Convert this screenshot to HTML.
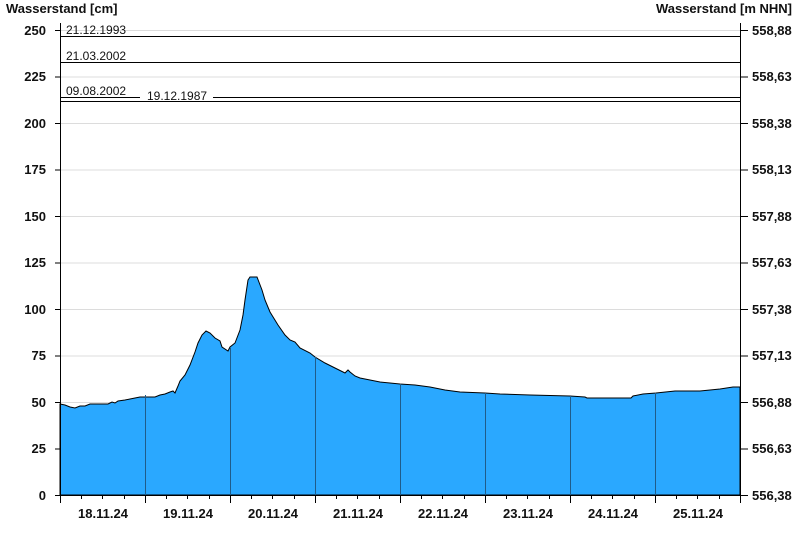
<!DOCTYPE html>
<html><head><style>
body{margin:0;background:#fff;}
svg{display:block;font-family:"Liberation Sans",Arial,sans-serif;}
.b{font-weight:bold;font-size:13px;fill:#111;}
.r{font-size:12px;fill:#111;}
</style></head><body>
<svg width="800" height="550" viewBox="0 0 800 550" xmlns="http://www.w3.org/2000/svg">
<text x="6" y="13" class="b">Wasserstand [cm]</text>
<text x="792" y="13" class="b" text-anchor="end">Wasserstand [m NHN]</text>
<g stroke="#dcdcdc" stroke-width="1">
<line x1="60" y1="30.5" x2="740" y2="30.5"/>
<line x1="60" y1="77" x2="740" y2="77"/>
<line x1="60" y1="123.5" x2="740" y2="123.5"/>
<line x1="60" y1="170" x2="740" y2="170"/>
<line x1="60" y1="216.5" x2="740" y2="216.5"/>
<line x1="60" y1="263" x2="740" y2="263"/>
<line x1="60" y1="309.5" x2="740" y2="309.5"/>
<line x1="60" y1="356" x2="740" y2="356"/>
<line x1="60" y1="402.5" x2="740" y2="402.5"/>
<line x1="60" y1="449" x2="740" y2="449"/>
</g>
<polygon fill="#2aa8ff" stroke="#000" stroke-width="1" points="60,495 60,404 65,405 70,407 75,408 80,406 85,406 90,404 100,404 108,404 112,402 115,403 118,401 125,400 130,399 135,398 140,397 145,397 155,397 160,395 165,394 170,392 173,391 175,393 178,386 180,381 185,375 190,365 195,352 198,343 202,335 206,331 210,333 215,338 220,341 222,347 228,351 230,347 235,343 240,330 243,315 245,300 248,280 250,277 257,277 262,290 265,300 270,312 278,325 285,335 290,340 295,342 300,348 310,353 315,357 325,363 335,368 345,373 348,370 350,372 355,376 360,378 370,380 380,382 390,383 400,384 415,385 430,387 445,390 460,392 485,393 500,394 530,395 570,396 585,397 587,398 631,398 633,396 643,394 656,393 675,391 700,391 720,389 733,387 740,387 740,495"/>
<g stroke="#1f5c8a" stroke-width="1">
<line x1="145.5" y1="395" x2="145.5" y2="495"/>
<line x1="230.5" y1="348" x2="230.5" y2="495"/>
<line x1="315.5" y1="357" x2="315.5" y2="495"/>
<line x1="400.5" y1="384" x2="400.5" y2="495"/>
<line x1="485.5" y1="393" x2="485.5" y2="495"/>
<line x1="570.5" y1="396" x2="570.5" y2="495"/>
<line x1="655.5" y1="393" x2="655.5" y2="495"/>
</g>
<g stroke="#000" stroke-width="1">
<line x1="60" y1="36.5" x2="740" y2="36.5"/>
<line x1="60" y1="62.5" x2="740" y2="62.5"/>
<line x1="60" y1="97.5" x2="140" y2="97.5"/>
<line x1="213" y1="97.5" x2="740" y2="97.5"/>
<line x1="60" y1="101.5" x2="740" y2="101.5"/>
<line x1="60.5" y1="23" x2="60.5" y2="495"/>
<line x1="740.5" y1="23" x2="740.5" y2="495"/>
<line x1="60" y1="495.5" x2="741" y2="495.5"/>
</g>
<text x="66" y="34" class="r">21.12.1993</text>
<text x="66" y="60" class="r">21.03.2002</text>
<text x="66" y="95" class="r">09.08.2002</text>
<text x="147" y="100" class="r">19.12.1987</text>
<g stroke="#000" stroke-width="1">
<path d="M55 30.5H60M55 77H60M55 123.5H60M55 170H60M55 216.5H60M55 263H60M55 309.5H60M55 356H60M55 402.5H60M55 449H60M55 495.5H60"/>
<path d="M741 30.5H748M741 77H748M741 123.5H748M741 170H748M741 216.5H748M741 263H748M741 309.5H748M741 356H748M741 402.5H748M741 449H748M741 495.5H748"/>
<path d="M60.5 495V503M145.5 495V503M230.5 495V503M315.5 495V503M400.5 495V503M485.5 495V503M570.5 495V503M655.5 495V503M740.5 495V503"/>
<path d="M81.5 495V499M102.5 495V499M124.5 495V499M166.5 495V499M187.5 495V499M209.5 495V499M251.5 495V499M272.5 495V499M294.5 495V499M336.5 495V499M357.5 495V499M379.5 495V499M421.5 495V499M442.5 495V499M464.5 495V499M506.5 495V499M527.5 495V499M549.5 495V499M591.5 495V499M612.5 495V499M634.5 495V499M676.5 495V499M697.5 495V499M719.5 495V499"/>
</g>
<g class="b" text-anchor="end">
<text x="46" y="35">250</text><text x="46" y="81">225</text><text x="46" y="128">200</text>
<text x="46" y="174">175</text><text x="46" y="221">150</text><text x="46" y="267">125</text>
<text x="46" y="314">100</text><text x="46" y="360">75</text><text x="46" y="407">50</text>
<text x="46" y="453">25</text><text x="46" y="500">0</text>
</g>
<g class="b">
<text x="752" y="35">558,88</text><text x="752" y="81">558,63</text><text x="752" y="128">558,38</text>
<text x="752" y="174">558,13</text><text x="752" y="221">557,88</text><text x="752" y="267">557,63</text>
<text x="752" y="314">557,38</text><text x="752" y="360">557,13</text><text x="752" y="407">556,88</text>
<text x="752" y="453">556,63</text><text x="752" y="500">556,38</text>
</g>
<g class="b" text-anchor="middle">
<text x="103" y="518">18.11.24</text><text x="188" y="518">19.11.24</text><text x="273" y="518">20.11.24</text>
<text x="358" y="518">21.11.24</text><text x="443" y="518">22.11.24</text><text x="528" y="518">23.11.24</text>
<text x="613" y="518">24.11.24</text><text x="698" y="518">25.11.24</text>
</g>
</svg>
</body></html>
